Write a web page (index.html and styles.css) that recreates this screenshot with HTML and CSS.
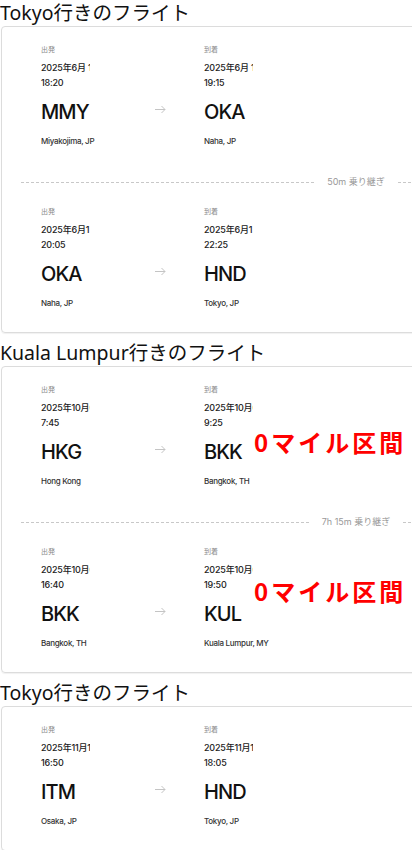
FILE: index.html
```html
<!DOCTYPE html>
<html>
<head>
    <meta charset="utf-8">
    <title>フライト</title>
    <link rel="stylesheet" href="styles.css">
</head>
<body>
    <div class="page">
        <section class="trip">
            <h2 class="trip-title">Tokyo行きのフライト</h2>
            <div class="card">
                <div class="segment">
                    <div class="point">
                        <div class="label">出発</div>
                        <div class="date">2025年6月 1日(日)</div>
                        <div class="time">18:20</div>
                        <div class="code">MMY</div>
                        <div class="city">Miyakojima, JP</div>
                    </div>
                    <div class="arrow"><svg width="11" height="9" viewBox="0 0 11 9"><path d="M0 4.5h10M6.5 1l3.5 3.5-3.5 3.5"/></svg></div>
                    <div class="point">
                        <div class="label">到着</div>
                        <div class="date">2025年6月 1日(日)</div>
                        <div class="time">19:15</div>
                        <div class="code">OKA</div>
                        <div class="city">Naha, JP</div>
                    </div>
                </div>
                <div class="layover"><span>50m 乗り継ぎ</span></div>
                <div class="segment">
                    <div class="point">
                        <div class="label">出発</div>
                        <div class="date">2025年6月1日(日)</div>
                        <div class="time">20:05</div>
                        <div class="code">OKA</div>
                        <div class="city">Naha, JP</div>
                    </div>
                    <div class="arrow"><svg width="11" height="9" viewBox="0 0 11 9"><path d="M0 4.5h10M6.5 1l3.5 3.5-3.5 3.5"/></svg></div>
                    <div class="point">
                        <div class="label">到着</div>
                        <div class="date">2025年6月1日(日)</div>
                        <div class="time">22:25</div>
                        <div class="code">HND</div>
                        <div class="city">Tokyo, JP</div>
                    </div>
                </div>
            </div>
        </section>

        <section class="trip">
            <h2 class="trip-title">Kuala Lumpur行きのフライト</h2>
            <div class="card">
                <div class="segment">
                    <div class="point">
                        <div class="label">出発</div>
                        <div class="date">2025年10月6日(月)</div>
                        <div class="time">7:45</div>
                        <div class="code">HKG</div>
                        <div class="city">Hong Kong</div>
                    </div>
                    <div class="arrow"><svg width="11" height="9" viewBox="0 0 11 9"><path d="M0 4.5h10M6.5 1l3.5 3.5-3.5 3.5"/></svg></div>
                    <div class="point">
                        <div class="label">到着</div>
                        <div class="date">2025年10月6日(月)</div>
                        <div class="time">9:25</div>
                        <div class="code">BKK</div>
                        <div class="city">Bangkok, TH</div>
                    </div>
                    <div class="note">0マイル区間</div>
                </div>
                <div class="layover"><span>7h 15m 乗り継ぎ</span></div>
                <div class="segment">
                    <div class="point">
                        <div class="label">出発</div>
                        <div class="date">2025年10月6日(月)</div>
                        <div class="time">16:40</div>
                        <div class="code">BKK</div>
                        <div class="city">Bangkok, TH</div>
                    </div>
                    <div class="arrow"><svg width="11" height="9" viewBox="0 0 11 9"><path d="M0 4.5h10M6.5 1l3.5 3.5-3.5 3.5"/></svg></div>
                    <div class="point">
                        <div class="label">到着</div>
                        <div class="date">2025年10月6日(月)</div>
                        <div class="time">19:50</div>
                        <div class="code">KUL</div>
                        <div class="city">Kuala Lumpur, MY</div>
                    </div>
                    <div class="note note-high">0マイル区間</div>
                </div>
            </div>
        </section>

        <section class="trip">
            <h2 class="trip-title">Tokyo行きのフライト</h2>
            <div class="card">
                <div class="segment">
                    <div class="point">
                        <div class="label">出発</div>
                        <div class="date">2025年11月1日(土)</div>
                        <div class="time">16:50</div>
                        <div class="code">ITM</div>
                        <div class="city">Osaka, JP</div>
                    </div>
                    <div class="arrow"><svg width="11" height="9" viewBox="0 0 11 9"><path d="M0 4.5h10M6.5 1l3.5 3.5-3.5 3.5"/></svg></div>
                    <div class="point">
                        <div class="label">到着</div>
                        <div class="date">2025年11月1日(土)</div>
                        <div class="time">18:05</div>
                        <div class="code">HND</div>
                        <div class="city">Tokyo, JP</div>
                    </div>
                </div>
            </div>
        </section>
    </div>
</body>
</html>
```

FILE: styles.css
```css
html, body {
    margin: 0;
    overflow: hidden;
    background: #fff;
}
body {
    font-family: Inter, "Noto Sans CJK JP", sans-serif;
    color: #111;
}
.page {
    width: 412px;
    overflow: hidden;
}
.trip {
    margin-bottom: 7px;
}
.trip-title {
    margin: 0;
    font-family: "Noto Sans", "Noto Sans CJK JP", sans-serif;
    font-size: 19.5px;
    font-weight: 400;
    line-height: 26px;
    color: #111;
}
.card {
    width: 670px;
    margin-left: 1px;
    padding: 0 19px;
    border: 1px solid #dcdcdc;
    border-radius: 4px;
    box-shadow: 0 1px 1px rgba(0, 0, 0, 0.06);
}
.segment {
    position: relative;
    display: flex;
    padding: 17px 0 23px 20px;
}
.point {
    width: 114px;
}
.arrow {
    width: 49px;
    padding-top: 61px;
}
.arrow svg {
    display: block;
    fill: none;
    stroke: #c4c4c4;
    stroke-width: 1;
}
.label {
    font-size: 7px;
    line-height: 12px;
    color: #8a8a8a;
}
.date, .time {
    font-size: 9px;
    line-height: 15px;
    font-weight: 500;
    letter-spacing: -0.2px;
    color: #222;
}
.date {
    width: 49px;
    margin-top: 4px;
    white-space: nowrap;
    overflow: hidden;
}
.code {
    margin-top: 9px;
    font-size: 20px;
    line-height: 26px;
    font-weight: 500;
    letter-spacing: -0.9px;
    color: #111;
}
.city {
    margin-top: 10px;
    font-size: 8px;
    line-height: 12px;
    font-weight: 500;
    letter-spacing: -0.3px;
    color: #333;
    white-space: nowrap;
}
.layover {
    display: flex;
    align-items: center;
    gap: 13px;
    margin-top: 5px;
    font-size: 9px;
    line-height: 14px;
    color: #999;
}
.layover::before,
.layover::after {
    content: "";
    flex: 1;
    border-top: 1px dashed #c8c8c8;
}
.note {
    position: absolute;
    left: 233px;
    top: 63px;
    font-family: "Noto Sans CJK JP", sans-serif;
    font-size: 24px;
    line-height: 24px;
    font-weight: 700;
    letter-spacing: 3px;
    color: #f00;
    white-space: nowrap;
}
.note-high {
    top: 50px;
}
```
